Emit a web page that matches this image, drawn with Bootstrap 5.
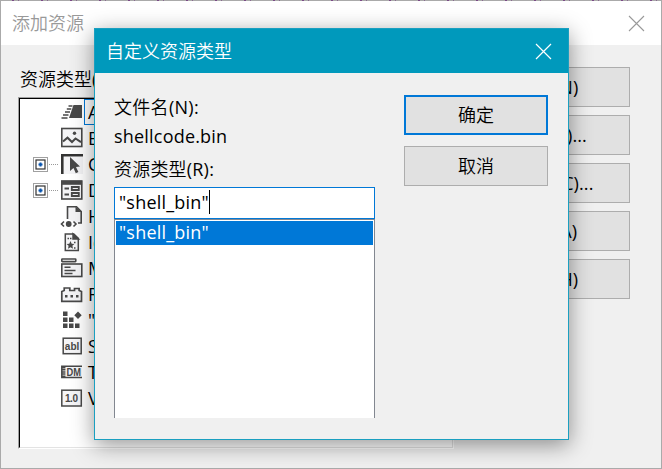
<!DOCTYPE html>
<html lang="zh-CN">
<head>
<meta charset="utf-8">
<meta name="viewport" content="width=device-width, initial-scale=1">
<title>添加资源</title>
<link href="https://cdn.jsdelivr.net/npm/bootstrap@5.3.0/dist/css/bootstrap.min.css" rel="stylesheet">
<style>
body{font-family:"Open Sans","Noto Sans CJK SC DemiLight","Noto Sans CJK SC",sans-serif;font-size:18px;line-height:24px;color:#000;background:#f0f0f0;overflow:hidden}
.win{width:662px;height:469px;border:1px solid #aaa;border-top:0;background:#f0f0f0}
.win-edge{height:1px;background:repeating-linear-gradient(90deg,transparent 0 11px,#7a4a86 11px 13px,transparent 13px 17px,#8a6a92 17px 18px,transparent 18px 29px),#aaa}
.win-title{height:44px;background:#fff;color:#999;padding:0 16px 0 11px}
.win-title span{margin-top:-1px}
.win-body{padding:22px 31px 0 17px}
.tree-label{height:30px;padding-left:2px}
.tree{width:436px;height:352px;background:#fff;border:1px solid;border-color:#a0a0a0 #fff #fff #a0a0a0}
.tree-in{height:350px;border:1px solid;border-color:#000 #e3e3e3 #e3e3e3 #000}
.tree-row{height:26px;padding-left:13px}
.knob{width:29px;height:26px}
.pic{width:24px;height:26px;margin-left:-2px;margin-right:1px;color:#484848}
.pic text{font:bold 10px "Liberation Sans",sans-serif;fill:currentColor}
.lbl{height:26px;padding:0 3px;border:1px solid transparent;line-height:24px;margin-left:-1px}
.lbl.cur{border-color:#0078d7}
.wbtn{height:40px;width:164px;border:1px solid #adadad;background:#e1e1e1;border-radius:0;font-size:18px;line-height:24px;padding:0;color:#000;letter-spacing:.1px}
.side{gap:8px}
.dlg{left:94px;top:28px;width:475px;height:412px;background:#f0f0f0;border:1px solid #1a9fc0;box-shadow:0 5px 21px rgba(0,0,0,.42)}
.dlg-title{height:44px;background:#0099bc;color:#fff;padding:0 16px 0 11px}
.dlg-body{padding:22px 20px 0 19px}
.dlg .wbtn{width:144px}
.dlg .wbtn.main{border:2px solid #0078d7;margin-bottom:11px}
.field{width:261px}
.row-a{height:29px;letter-spacing:.3px}
.row-b{height:33px}
.row-c{height:30px;letter-spacing:.2px}
.lat{letter-spacing:.2px}
.edit{height:32px;border:1px solid #0078d7;background:#fff;padding-left:4px}
.edit span:first-child{margin-top:-3px}
.caret{width:1px;height:24px;background:#000;margin-top:-3px}
.opts{height:199px;background:#fff;border:1px solid #828790;border-bottom:0;padding:1px}
.opt{height:24px;background:#0078d7;color:#fff;padding-left:3px;line-height:23px}
</style>
<script src="https://cdn.jsdelivr.net/npm/bootstrap@5.3.0/dist/js/bootstrap.bundle.min.js"></script>
</head>
<body>
<svg class="d-none">
<symbol id="knob" viewBox="0 0 29 26"><rect x=".5" y="6.500" width="14" height="14" fill="#fff" stroke="#a0a0a0"/><rect x="3" y="9" width="9" height="9" fill="#fff" stroke="#333" stroke-width="1.200"/><path d="M7.500 11.500v4M5.500 13.500h4" stroke="#0a56b0" stroke-width="2"/><path d="M16 13.500h10" stroke="#999" stroke-dasharray="1 1"/></symbol>
</svg>
<div class="win">
  <div class="win-edge"></div>
  <div class="win-title d-flex align-items-center justify-content-between"><span>添加资源</span>
    <svg width="17" height="17" viewBox="0 0 17 17" stroke="#999" stroke-width="1.1"><path d="M1 1l15 15M16 1L1 16"/></svg></div>
  <div class="win-body d-flex justify-content-between">
    <div>
      <div class="tree-label text-nowrap">资源类型(T):</div>
      <div class="tree"><div class="tree-in">
        <div class="tree-row d-flex"><span class="knob"></span><svg class="pic"><path d="M13.500 6H22v13H9z" fill="currentColor"/><path d="M8.500 7h4M6.800 10h4.500M5 13h5M3 16h5.500M1.500 19h6" stroke="currentColor" stroke-width="1.700"/></svg><span class="lbl cur">Accelerator</span></div>
        <div class="tree-row d-flex"><span class="knob"></span><svg class="pic" fill="none" stroke="currentColor" stroke-width="1.6"><rect x="1.800" y="3.500" width="20" height="18" fill="#f5f5f7"/><path d="M3 16.500l4.500-3.800 4.500 4.300 3.500-3.500 5.500 3.700" stroke-width="2"/><circle cx="14.500" cy="8.300" r="1.700" fill="currentColor" stroke="none"/></svg><span class="lbl">Bitmap</span></div>
        <div class="tree-row d-flex"><svg class="knob"><use href="#knob"/></svg><svg class="pic"><path d="M4 6h19v17H4z" fill="#f3f3f5"/><path d="M2.300 23V4.200H23" fill="none" stroke="#333" stroke-width="2.600"/><path d="M10 6v14l3.500-3 2.300 5.200 2.600-1.200-2.400-5 4-.5z" fill="currentColor"/></svg><span class="lbl">Cursor</span></div>
        <div class="tree-row d-flex"><svg class="knob"><use href="#knob"/></svg><svg class="pic" fill="none" stroke="currentColor" stroke-width="1.600"><rect x="1.800" y="4" width="20" height="18" fill="#f3f3f5"/><path d="M1.500 5.800h20.600" stroke-width="4"/><path d="M4.500 11.500H9M4.500 17.500H9" stroke-width="2"/><path d="M11.800 10h7v3h-7zM11.800 16h7v3h-7z" stroke-width="1.800"/></svg><span class="lbl">Dialog</span></div>
        <div class="tree-row d-flex"><span class="knob"></span><svg class="pic" fill="none" stroke="currentColor" stroke-width="1.600"><path d="M7.500 16V3.800h9l4.700 4.700V20H18" fill="#f3f3f5"/><path d="M15.500 3.500v5.500h6z" fill="currentColor" stroke="none"/><path d="M4 18.500L1.500 21 4 23.500M13.500 18.500L16 21l-2.500 2.500"/><circle cx="8.700" cy="21" r="2.900" fill="currentColor" stroke="none"/></svg><span class="lbl">HTML</span></div>
        <div class="tree-row d-flex"><span class="knob"></span><svg class="pic" fill="none" stroke="currentColor" stroke-width="1.500"><path d="M5.300 5h8.500l4.500 4.300v12.200h-13z" fill="#f5f5f7"/><path d="M13 5v5h5.500z" fill="currentColor"/><path d="M7.500 9.500h4M14 13.500h2.500M14 19h2.500" stroke-dasharray="1.500 1"/><path d="M10.500 12l1.200 2.800 2.700.2-2 1.800.6 3-2.500-1.500L8 19.800l.6-3-2-1.800 2.700-.2z" fill="currentColor" stroke="none"/></svg><span class="lbl">Icon</span></div>
        <div class="tree-row d-flex"><span class="knob"></span><svg class="pic" fill="none" stroke="currentColor" stroke-width="1.600"><rect x="1.800" y="4" width="14" height="2.600" rx=".5"/><rect x="1.800" y="9" width="20" height="12.500" fill="#f3f3f5"/><path d="M4.500 12.300h6M4.500 15.500h11M4.500 18.500h8" stroke-width="1.500"/></svg><span class="lbl">Menu</span></div>
        <div class="tree-row d-flex"><span class="knob"></span><svg class="pic" fill="none" stroke="currentColor" stroke-width="1.700"><path d="M1.800 20.300V10.500l2.400-1V7h5.600v2.500h4.700V7.500h4.600v2l2.400 1v9.800z" fill="#f3f3f5"/><path d="M5 15.300h2.500M10.500 15.300H13M16 15.300h2.500" stroke-width="2.500"/></svg><span class="lbl">Ribbon</span></div>
        <div class="tree-row d-flex"><span class="knob"></span><svg class="pic" fill="currentColor"><path d="M3 4.500h4.500V9H3zM3 10.500h4.500V15H3zM9 10.500h4.500V15H9zM3 16.500h4.500V21H3zM9 16.500h4.500V21H9zM15 16.500h4.500V21H15zM18 4.500l3.700 3.700L18 11.900l-3.700-3.700z"/></svg><span class="lbl">"shell_bin"</span></div>
        <div class="tree-row d-flex"><span class="knob"></span><svg class="pic"><rect x="3.200" y="5.200" width="18" height="15.500" fill="#f5f5f7" stroke="currentColor" stroke-width="1.500"/><text x="4.800" y="16.700" textLength="14.500">abl</text></svg><span class="lbl text-nowrap">String Table</span></div>
        <div class="tree-row d-flex"><span class="knob"></span><svg class="pic"><path d="M22 7.200H1.800v11.300H22" fill="#f5f5f7" stroke="currentColor" stroke-width="1.500"/><path d="M3.700 8v10" stroke="currentColor" stroke-width="3.500" stroke-dasharray="1.500 .6"/><text x="6.500" y="16.500" textLength="14.500" lengthAdjust="spacingAndGlyphs">DM</text></svg><span class="lbl">Toolbar</span></div>
        <div class="tree-row d-flex"><span class="knob"></span><svg class="pic"><rect x="1.800" y="5.200" width="19.500" height="15.800" fill="#f5f5f7" stroke="currentColor" stroke-width="1.500"/><text x="5" y="17" textLength="13">1.0</text></svg><span class="lbl">Version</span></div>
      </div></div>
    </div>
    <div class="side d-flex flex-column">
      <button class="btn wbtn">新建(N)</button>
      <button class="btn wbtn">导入(M)...</button>
      <button class="btn wbtn">自定义(C)...</button>
      <button class="btn wbtn">取消(A)</button>
      <button class="btn wbtn">帮助(H)</button>
    </div>
  </div>
</div>
<div class="dlg position-absolute">
  <div class="dlg-title d-flex align-items-center justify-content-between"><span>自定义资源类型</span>
    <svg width="17" height="17" viewBox="0 0 17 17" stroke="#fff" stroke-width="1.200"><path d="M1 1l15 15M16 1L1 16"/></svg></div>
  <div class="dlg-body d-flex justify-content-between">
    <div class="field">
      <div class="row-a">文件名(N):</div>
      <div class="row-b lat">shellcode.bin</div>
      <div class="row-c">资源类型(R):</div>
      <div class="edit lat d-flex align-items-center"><span>"shell_bin"</span><span class="caret"></span></div>
      <div class="opts"><div class="opt lat">"shell_bin"</div></div>
    </div>
    <div class="d-flex flex-column">
      <button class="btn wbtn main">确定</button>
      <button class="btn wbtn">取消</button>
    </div>
  </div>
</div>
</body>
</html>
